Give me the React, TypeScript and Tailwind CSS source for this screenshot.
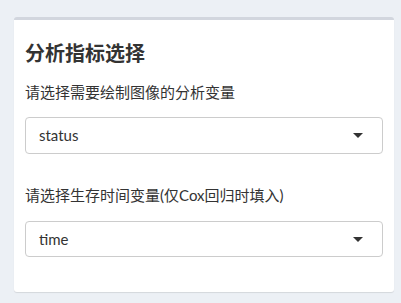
const fontStack = {
  fontFamily: '"Lato", "Noto Sans CJK SC", sans-serif',
};

const SelectBox = ({ value, className }: { value: string; className: string }) => (
  <div
    className={`flex items-center justify-between rounded-[4px] border border-[#cccccc] bg-white pl-[13px] pr-[19px] text-[15px] text-[#333333] ${className}`}
  >
    <span>{value}</span>
    <span className="h-0 w-0 border-x-[5.5px] border-t-[5px] border-x-transparent border-t-[#333333]" />
  </div>
);

export default function App() {
  return (
    <div className="h-[303px] w-[401px] bg-[#ecf0f5] pl-[14px] pr-[7px] pt-[17px]" style={fontStack}>
      <div className="h-[275px] rounded-[3px] border-t-[3px] border-[#d2d6de] bg-white px-[11px] shadow-[0_1px_1px_rgba(0,0,0,0.1)]">
        <div className="mt-[22px] h-[22px] text-[20px] font-bold leading-[22px] text-[#333333]">
          分析指标选择
        </div>
        <div className="mt-[18px] h-[20px] text-[15px] leading-[20px] text-[#333333]">
          请选择需要绘制图像的分析变量
        </div>
        <SelectBox value="status" className="mt-[15px] h-[37px]" />
        <div className="mt-[31px] h-[20px] text-[15px] leading-[20px] text-[#333333]">
          请选择生存时间变量(仅Cox回归时填入)
        </div>
        <SelectBox value="time" className="mt-[16px] h-[36px]" />
      </div>
    </div>
  );
}
